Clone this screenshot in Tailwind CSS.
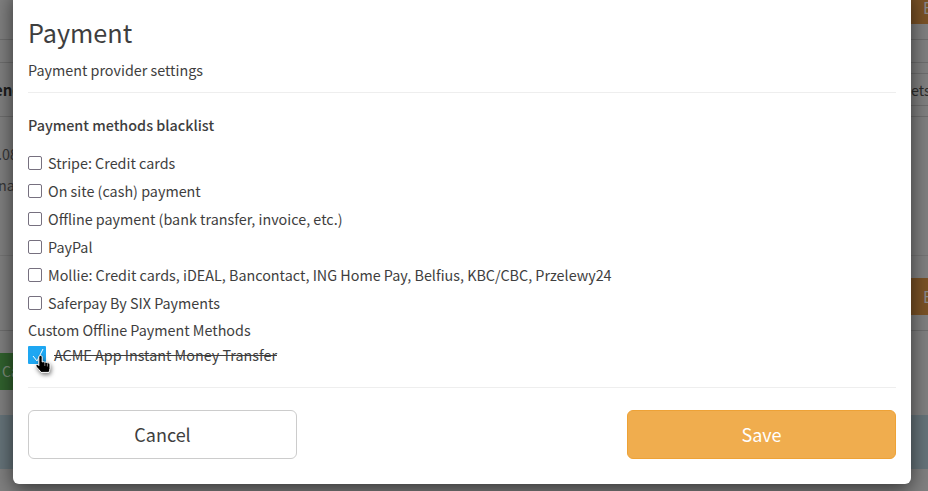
<!DOCTYPE html>
<html lang="en">
  <head>
    <meta charset="UTF-8" />
    <title>Payment</title>
    <script src="https://cdn.jsdelivr.net/npm/@tailwindcss/browser@4"></script>
  </head>
  <body class="relative w-[928px] h-[491px] overflow-hidden bg-[#808080] font-['Noto_Sans_CJK_SC',sans-serif] text-[14.35px] text-[#3e3e3e]">
    <!-- Page behind the backdrop -->
    <div class="absolute left-0 top-0 w-full h-full text-[#1c1c1c]">
      <div class="absolute left-[905px] top-0 w-[23px] h-[24px] bg-[#7a5226] text-[#8a8a8a] pl-[18px] text-[16px] leading-[14px]">E</div>
      <div class="absolute left-0 top-[39px] w-full h-px bg-[#6e6e6e]"></div>
      <div class="absolute left-0 top-[62px] w-full h-px bg-[#6e6e6e]"></div>
      <div class="absolute left-[905px] top-[73px] w-[23px] h-px bg-[#6e6e6e]"></div>
      <div class="absolute left-[905px] top-[105px] w-[23px] h-px bg-[#6e6e6e]"></div>
      <div class="absolute left-0 top-[116px] w-full h-px bg-[#6e6e6e]"></div>
      <div class="absolute left-0 top-[255px] w-full h-px bg-[#757575]"></div>
      <div class="absolute left-0 top-[330px] w-full h-px bg-[#6e6e6e]"></div>
      <span class="absolute left-[-6px] top-[80px] font-semibold leading-5 text-[15px]">ene</span>
      <span class="absolute left-[911px] top-[80px] leading-5 text-[#2c2c2c]">ets</span>
      <span class="absolute left-[-2px] top-[144px] leading-5 text-[#383838]">.08</span>
      <span class="absolute left-[-2px] top-[175px] leading-5 text-[#383838]">na</span>
      <div class="absolute left-[905px] top-[278px] w-[23px] h-[37px] bg-[#7a5226] text-[#8a8a8a] pl-[18px] text-[16px] leading-[37px]">E</div>
      <div class="absolute left-0 top-[353px] w-[13px] h-[37px] bg-[#31622e] text-[#7d8d7b] pl-[2px] text-[14px] leading-[37px] whitespace-nowrap overflow-hidden">Ca</div>
      <div class="absolute left-0 top-[415px] w-full h-[54px] bg-[#66747a]"></div>
    </div>

    <!-- Modal -->
    <div class="absolute left-[13px] top-[-10px] w-[898px] h-[494px] bg-white rounded-[6px] shadow-[0_5px_20px_rgba(0,0,0,0.6)] px-[15px] pt-[25px] flex flex-col">
      <div class="border-b border-[#eeeeee] h-[78px]">
        <h2 class="text-[25.2px] leading-[34px] font-normal">Payment</h2>
        <p class="mt-[11px] leading-5">Payment provider settings</p>
      </div>
      <h3 class="mt-[22px] font-medium leading-5">Payment methods blacklist</h3>
      <div class="mt-[18px] flex flex-col gap-2 leading-5">
        <label class="flex items-center gap-[6px]"><span class="w-[14px] h-[14px] rounded-[2px] border border-[#76707f] bg-white"></span>Stripe: Credit cards</label>
        <label class="flex items-center gap-[6px]"><span class="w-[14px] h-[14px] rounded-[2px] border border-[#76707f] bg-white"></span>On site (cash) payment</label>
        <label class="flex items-center gap-[6px]"><span class="w-[14px] h-[14px] rounded-[2px] border border-[#76707f] bg-white"></span>Offline payment (bank transfer, invoice, etc.)</label>
        <label class="flex items-center gap-[6px]"><span class="w-[14px] h-[14px] rounded-[2px] border border-[#76707f] bg-white"></span>PayPal</label>
        <label class="flex items-center gap-[6px]"><span class="w-[14px] h-[14px] rounded-[2px] border border-[#76707f] bg-white"></span>Mollie: Credit cards, iDEAL, Bancontact, ING Home Pay, Belfius, KBC/CBC, Przelewy24</label>
        <label class="flex items-center gap-[6px]"><span class="w-[14px] h-[14px] rounded-[2px] border border-[#76707f] bg-white"></span>Saferpay By SIX Payments</label>
      </div>
      <p class="mt-[7px] leading-5">Custom Offline Payment Methods</p>
      <label class="relative mt-[5px] flex items-center gap-2 leading-5">
        <span class="w-[18px] h-[18px] bg-[#1ea7f2] rounded-[1px]">
          <svg width="18" height="18" viewBox="0 0 18 18" fill="none" stroke="white" stroke-width="1"><path d="M5 10 L9 15 L15 3"/></svg>
        </span>
        <span class="line-through">ACME App Instant Money Transfer</span>
        <!-- Hand cursor -->
        <svg class="absolute left-[7px] top-[10px] drop-shadow-[1px_2px_2px_rgba(0,0,0,0.5)]" width="18" height="19" viewBox="0 0 18 19">
          <path d="M5.5.5c1 0 1.7.7 1.7 1.6V7c.9-.5 2-.4 2.6.4.9-.5 2-.3 2.6.6 1-.4 2.6.1 2.6 1.8v3.6c0 1.6-.7 2.4-1 4H6c-.4-1.2-4.5-5-5-6.2-.5-1.3.9-2.3 2.2-1.3l.6.6V2.1c0-.9.7-1.6 1.7-1.6z" fill="#000" stroke="#fff" stroke-width="1"/>
          <path d="M9.8 8v3M12.4 8.5v3" stroke="#fff" stroke-width=".5"/>
        </svg>
      </label>
      <div class="mt-[22px] border-t border-[#eeeeee] pt-[22px] flex justify-between">
        <button class="w-[269px] h-[49px] rounded-[6px] border border-[#cccccc] bg-white text-[18px]">Cancel</button>
        <button class="w-[269px] h-[49px] rounded-[6px] border border-[#eea236] bg-[#f0ad4e] text-white text-[18px]">Save</button>
      </div>
    </div>
  </body>
</html>
